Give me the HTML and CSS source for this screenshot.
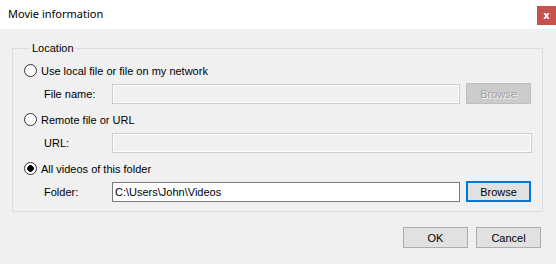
FILE: index.html
```html
<!DOCTYPE html>
<html lang="en">
<head>
  <meta charset="UTF-8">
  <title>Movie information</title>
  <link rel="stylesheet" href="styles.css">
</head>
<body>
  <div class="titlebar">
    <span class="title">Movie information</span>
    <button class="close">x</button>
  </div>

  <fieldset class="group">
    <legend>Location</legend>

    <label class="option">
      <input type="radio" name="source">
      <span>Use local file or file on my network</span>
    </label>
    <div class="field">
      <span class="caption">File name:</span>
      <input class="text short" type="text" disabled>
      <button class="btn" disabled>Browse</button>
    </div>

    <label class="option">
      <input type="radio" name="source">
      <span>Remote file or URL</span>
    </label>
    <div class="field">
      <span class="caption">URL:</span>
      <input class="text long" type="text" disabled>
    </div>

    <label class="option">
      <input type="radio" name="source" checked>
      <span>All videos of this folder</span>
    </label>
    <div class="field">
      <span class="caption">Folder:</span>
      <input class="text short" type="text" value="C:\Users\John\Videos">
      <button class="btn focus">Browse</button>
    </div>
  </fieldset>

  <div class="actions">
    <button class="btn">OK</button>
    <button class="btn">Cancel</button>
  </div>
</body>
</html>
```

FILE: styles.css
```css
* {
  margin: 0; padding: 0; box-sizing: border-box;
}
body {
  background: #f0f0f0;
  color: #000;
  font-family: 'Liberation Sans', Arial, sans-serif;
  font-size: 11px;
  width: 556px;
  height: 264px;
  overflow: hidden;
}
.titlebar {
  display: flex;
  justify-content: space-between;
  align-items: flex-start;
  height: 29px;
  background: #fff;
}
.title {
  margin: 6px 0 0 8px;
  font-family: 'Noto Sans', sans-serif;
  font-size: 11px;
  line-height: 16px;
}
.close {
  width: 19px;
  height: 19px;
  margin-top: 6px;
  border: none;
  background: #c75050;
  color: #fff;
  font-family: 'DejaVu Sans', sans-serif;
  font-size: 10px;
  font-weight: bold;
  line-height: 17px;
}
.group {
  margin: 12px 13px 0 12px;
  padding: 4px 10px 4px 11px;
  border: 1px solid #dcdcdc;
}
.group legend {
  margin-left: 6px;
  padding: 0 2px;
  line-height: 15px;
}
.option {
  display: flex;
  align-items: center;
  gap: 4px;
  height: 21px;
}
.option input {
  appearance: none;
  width: 13px;
  height: 13px;
  border: 1px solid #333;
  border-radius: 50%;
  background: #fff;
}
.option input:checked {
  background: radial-gradient(circle, #000 0 3px, #fff 3.6px);
}
.field {
  display: flex;
  align-items: center;
  height: 28px;
  padding: 2px 0 5px 20px;
}
.caption {
  width: 68px;
}
.text {
  height: 20px;
  border: 1px solid #7a7a7a;
  background: #fff;
  padding: 0 2px;
  font: inherit;
  color: #000;
}
.text:disabled {
  border-color: #ccc;
  background: #f0f0f0;
  box-shadow: inset 0 0 0 1px #fff;
}
.short {
  width: 348px;
}
.long {
  width: 420px;
}
.btn {
  width: 65px;
  height: 21px;
  border: 1px solid #adadad;
  background: #e1e1e1;
  font: inherit;
  color: #000;
}
.field .btn {
  margin-left: 6px;
}
.btn:disabled {
  border-color: #bfbfbf;
  background: #cccccc;
  color: #a3a3a3;
  text-shadow: 1px 1px 0 #f4f4f4;
}
.btn.focus {
  border: 2px solid #0078d7;
}
.actions {
  display: flex;
  justify-content: flex-end;
  gap: 8px;
  margin: 15px 15px 0 0;
}
```
